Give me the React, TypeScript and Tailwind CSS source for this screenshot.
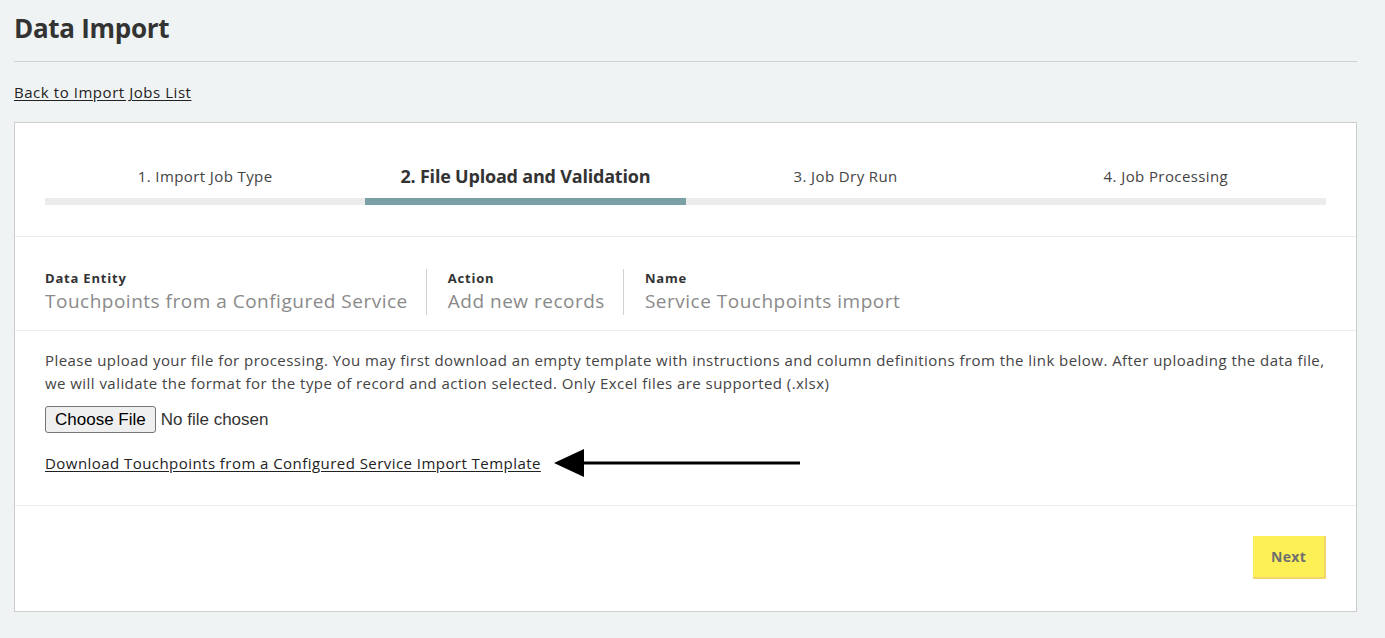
import React from 'react';

const steps = [
    { label: '1. Import Job Type', active: false },
    { label: '2. File Upload and Validation', active: true },
    { label: '3. Job Dry Run', active: false },
    { label: '4. Job Processing', active: false },
];

const details = [
    { label: 'Data Entity', value: 'Touchpoints from a Configured Service' },
    { label: 'Action', value: 'Add new records' },
    { label: 'Name', value: 'Service Touchpoints import' },
];

export default function App() {
    return (
        <div className="min-h-screen bg-[#f0f3f4] pl-[14px] pr-[28px] pt-[10px] pb-6 text-[#333] [font-family:'Open_Sans','Liberation_Sans',sans-serif]">
            <h1 className="text-[26px] font-bold leading-[36px] tracking-[-0.3px] text-[#333]">Data Import</h1>
            <div className="mt-[15px] border-t border-[#cfd2d3]" />
            <a href="#" className="mt-[19px] inline-block text-[15px] leading-[22px] tracking-[0.55px] text-[#222] underline underline-offset-2">
                Back to Import Jobs List
            </a>

            <div className="mt-[18px] border border-[#cdcdcd] bg-white">
                {/* Stepper */}
                <div className="border-b border-[#ececec] px-[30px] pt-[40px] pb-[31px]">
                    <div className="grid grid-cols-4">
                        {steps.map((s) => (
                            <div key={s.label} className="flex flex-col">
                                <div
                                    className={
                                        s.active
                                            ? 'flex h-[26px] items-center justify-center text-[18px] font-bold tracking-[-0.2px] text-[#333]'
                                            : 'flex h-[26px] items-center justify-center text-[15px] tracking-[0.4px] text-[#444]'
                                    }
                                >
                                    {s.label}
                                </div>
                                <div className={s.active ? 'mt-[9px] h-[7px] bg-[#7a9fa5]' : 'mt-[9px] h-[7px] bg-[#ececec]'} />
                            </div>
                        ))}
                    </div>
                </div>

                {/* Job details */}
                <div className="flex border-b border-[#ececec] px-[30px] pt-[32px] pb-[15px]">
                    {details.map((d, i) => (
                        <div
                            key={d.label}
                            className={i === 0 ? 'pr-[18px]' : 'border-l border-[#d0d0d0] pl-[21px] pr-[18px]'}
                        >
                            <div className="text-[13px] font-bold leading-[18px] tracking-[0.8px] text-[#333]">{d.label}</div>
                            <div className="text-[19px] leading-[28px] tracking-[0.5px] text-[#8a8a8a]">{d.value}</div>
                        </div>
                    ))}
                </div>

                {/* Upload */}
                <div className="border-b border-[#ececec] px-[30px] pt-[18px] pb-[27px]">
                    <p className="text-[15px] leading-[23px] tracking-[0.45px] text-[#444]">
                        Please upload your file for processing. You may first download an empty template with instructions and column definitions from the link below. After uploading the data file, we will validate the format for the type of record and action selected. Only Excel files are supported (.xlsx)
                    </p>
                    <div className="mt-[11px] flex items-center">
                        <button className="h-[27px] rounded-[3px] border border-[#767676] bg-[#efefef] px-[9px] text-[17px] text-black [font-family:'Liberation_Sans',Arial,sans-serif]">
                            Choose File
                        </button>
                        <span className="ml-[5px] text-[17px] text-[#333] [font-family:'Liberation_Sans',Arial,sans-serif]">No file chosen</span>
                    </div>
                    <div className="mt-[15px] flex items-center">
                        <a href="#" className="text-[15px] leading-[22px] tracking-[0.45px] text-[#222] underline underline-offset-2">
                            Download Touchpoints from a Configured Service Import Template
                        </a>
                        <svg width="250" height="30" viewBox="0 0 250 30" className="ml-[11px]">
                            <polygon points="2,15 32,1 32,29" fill="#000" />
                            <line x1="30" y1="15" x2="248" y2="15" stroke="#000" strokeWidth="3" />
                        </svg>
                    </div>
                </div>

                {/* Footer */}
                <div className="flex justify-end px-[30px] pt-[30px] pb-[32px]">
                    <button className="h-[43px] w-[73px] border-r-2 border-b-2 border-[#f2d66c] bg-[#fdf057] text-[14px] font-bold tracking-[0.3px] text-[#6f6f6f]">
                        Next
                    </button>
                </div>
            </div>
        </div>
    );
}
